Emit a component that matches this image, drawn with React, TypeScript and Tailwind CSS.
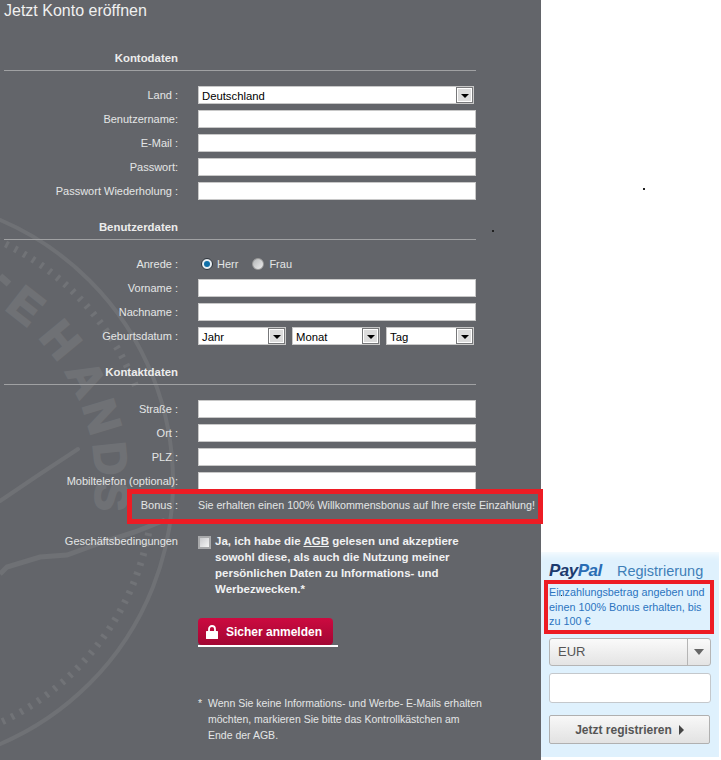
import React from "react";

const font = { fontFamily: '"Liberation Sans", Arial, sans-serif' };

const letters: [string, number][] = [
  ["E", -52],
  ["H", -39.5],
  ["A", -27.5],
  ["N", -17],
  ["D", -6],
  ["S", 3.5],
];

function Watermark() {
  const cx = -112;
  const cy = 482;
  const ticks: React.ReactNode[] = [];
  for (let a = -70; a <= 72; a += 2.2) {
    if (a > -20 && a < 11) continue;
    const r = (a * Math.PI) / 180;
    ticks.push(
      <line
        key={a}
        x1={cx + 262 * Math.cos(r)}
        y1={cy + 262 * Math.sin(r)}
        x2={cx + 269 * Math.cos(r)}
        y2={cy + 269 * Math.sin(r)}
        stroke="#717377"
        strokeWidth="3"
      />
    );
  }
  return (
    <svg className="absolute left-0 top-0" width="541" height="760" viewBox="0 0 541 760" aria-hidden="true">
      <circle cx={cx} cy={cy} r="285" fill="none" stroke="#6f7175" strokeWidth="4" />
      {ticks}
      {letters.map(([ch, a]) => {
        const r = (a * Math.PI) / 180;
        const x = cx + 208 * Math.cos(r);
        const y = cy + 208 * Math.sin(r);
        return (
          <text
            key={ch}
            transform={`translate(${x} ${y}) rotate(${a + 90})`}
            textAnchor="middle"
            fontSize="46"
            fontWeight="700"
            fill="#6f7175"
            stroke="#6f7175"
            strokeWidth="2"
            style={font}
          >
            {ch}
          </text>
        );
      })}
      <path d="M0 276 L9 284" fill="none" stroke="#6f7175" strokeWidth="7" />
      <path d="M0 501 L40 474 L72 453 L78 449" fill="none" stroke="#6f7175" strokeWidth="4" strokeLinecap="round" />
      <path d="M0 574 L7 567 L40 557 L67 555 L100 543 L135 532 L165 520" fill="none" stroke="#6f7175" strokeWidth="5" />
    </svg>
  );
}

function Arrow() {
  return (
    <span className="flex h-[16px] w-[17px] shrink-0 items-center justify-center border border-[#77787a] bg-[#dcdcdc] shadow-[inset_0_0_0_1px_#ffffff]">
      <span className="mt-[2px] h-0 w-0 border-x-[4px] border-t-[4px] border-x-transparent border-t-black" />
    </span>
  );
}

function Select({ label, className }: { label: string; className: string }) {
  return (
    <div className={`flex h-[18px] items-center justify-between bg-white pl-[4px] pr-[1px] outline outline-1 -outline-offset-1 outline-[#c8c8c8] ${className}`}>
      <span className="pt-[1px] text-[11.3px] leading-[18px] text-black">{label}</span>
      <Arrow />
    </div>
  );
}

function Field() {
  return <div className="h-[18px] w-[278px] border border-[#c8c8c8] bg-white" />;
}

function Row({ label, children, className = "mt-[6px]" }: { label: string; children?: React.ReactNode; className?: string }) {
  return (
    <div className={`flex h-[18px] items-center gap-[20px] ${className}`}>
      <div className="w-[178px] shrink-0 whitespace-nowrap pt-[1px] text-right text-[11px] leading-[17px] text-[#e4e5e6]">{label}</div>
      {children}
    </div>
  );
}

function Section({ title, className }: { title: string; className: string }) {
  return (
    <div className={className}>
      <div className="w-[178px] pt-[1px] text-right text-[11.4px] font-bold leading-[15px] text-[#ececec]">{title}</div>
      <div className="ml-[4px] mt-[4px] h-px w-[472px] bg-[#a0a1a3]" />
    </div>
  );
}

export default function App() {
  return (
    <div className="relative flex h-[760px] w-[721px] overflow-hidden bg-white" style={font}>
      <div className="relative h-[760px] w-[541px] shrink-0 overflow-hidden bg-[#63656a]">
        <Watermark />
        <div className="relative">
          <h1 className="pl-[4px] pt-[1px] text-[16px] font-normal leading-[19px] text-[#f0f0f0]">Jetzt Konto eröffnen</h1>

          <Section title="Kontodaten" className="mt-[30px]" />
          <Row label="Land :" className="mt-[15px]">
            <Select label="Deutschland" className="w-[276px]" />
          </Row>
          <Row label="Benutzername:"><Field /></Row>
          <Row label="E-Mail :"><Field /></Row>
          <Row label="Passwort:"><Field /></Row>
          <Row label="Passwort Wiederholung :"><Field /></Row>

          <Section title="Benutzerdaten" className="mt-[19px]" />
          <Row label="Anrede :" className="mt-[15px]">
            <div className="flex items-center text-[11px] text-[#e4e5e6]">
              <span className="ml-[3px] flex h-[12px] w-[12px] items-center justify-center rounded-full border border-[#2a3038] bg-[#e8eef2]">
                <span className="h-[6px] w-[6px] rounded-full bg-[#0f6fa8]" />
              </span>
              <span className="ml-[4px]">Herr</span>
              <span className="ml-[14px] h-[12px] w-[12px] rounded-full border border-[#9a9a9a] bg-gradient-to-br from-[#b4b6b8] to-[#eeeeee]" />
              <span className="ml-[5px]">Frau</span>
            </div>
          </Row>
          <Row label="Vorname :"><Field /></Row>
          <Row label="Nachname :"><Field /></Row>
          <Row label="Geburtsdatum :">
            <div className="flex gap-[6px]">
              <Select label="Jahr" className="w-[88px]" />
              <Select label="Monat" className="w-[88px]" />
              <Select label="Tag" className="w-[88px]" />
            </div>
          </Row>

          <Section title="Kontaktdaten" className="mt-[19px]" />
          <Row label="Straße :" className="mt-[15px]"><Field /></Row>
          <Row label="Ort :"><Field /></Row>
          <Row label="PLZ :"><Field /></Row>
          <Row label="Mobiltelefon (optional):"><Field /></Row>

          <Row label="Bonus :" className="mt-[6px]">
            <span className="whitespace-nowrap pt-[1px] text-[10.7px] leading-[17px] text-[#e4e5e6]">
              Sie erhalten einen 100% Willkommensbonus auf Ihre erste Einzahlung!
            </span>
          </Row>

          <div className="mt-[19px] flex gap-[20px]">
            <div className="w-[178px] shrink-0 pt-[1px] text-right text-[11px] leading-[15px] text-[#e4e5e6]">Geschäftsbedingungen</div>
            <div className="flex">
              <span className="mt-[3px] h-[13px] w-[13px] shrink-0 border-2 border-[#a8a9ab] bg-gradient-to-br from-[#c9cacd] to-[#f5f5f5]" />
              <p className="ml-[4px] w-[262px] text-[11.5px] font-bold leading-[16px] text-[#f0f1f2]">
                Ja, ich habe die <span className="underline">AGB</span> gelesen und akzeptiere sowohl diese, als auch die Nutzung meiner persönlichen Daten zu Informations- und Werbezwecken.*
              </p>
            </div>
          </div>

          <div className="ml-[198px] mt-[21px] w-[140px] border-b-2 border-white">
            <button className="flex h-[27px] w-[135px] items-center rounded-[4px] bg-gradient-to-b from-[#cc0a40] to-[#a30733] pl-[8px] text-[12px] font-bold text-white">
              <svg width="12" height="14" viewBox="0 0 12 14" className="mr-[8px] shrink-0">
                <path d="M3 6V4a3 3 0 0 1 6 0v2" fill="none" stroke="#fff" strokeWidth="1.8" />
                <rect x="0" y="6" width="12" height="8" rx="0.5" fill="#fff" />
              </svg>
              Sicher anmelden
            </button>
          </div>

          <div className="ml-[198px] mt-[48px] flex text-[10.5px] leading-[16px] text-[#e4e5e6]">
            <span className="w-[10px] shrink-0">*</span>
            <p className="w-[290px]">
              Wenn Sie keine Informations- und Werbe- E-Mails erhalten<br />
              möchten, markieren Sie bitte das Kontrollkästchen am<br />
              Ende der AGB.
            </p>
          </div>
        </div>

        <span className="absolute left-[492px] top-[230px] h-[2px] w-[2px] bg-[#222]" />
      </div>

      <div className="flex w-[180px] flex-col pb-[3px]">
        <div className="flex-1" />
        <div className="flex h-[205px] w-[178px] flex-col bg-[#dff1fd] pl-[8px] pr-[8px] shadow-[inset_0_8px_8px_-6px_#ffffff]">
          <div className="mt-[10px] flex h-[18px] items-center">
            <span className="w-[68px] text-[17px] font-bold italic leading-[18px] tracking-[-0.5px]">
              <span className="text-[#1c3a6e]">Pay</span><span className="text-[#2a6db5]">Pal</span>
            </span>
            <span className="text-[14.5px] leading-[18px] text-[#3f7fb8]">Registrierung</span>
          </div>
          <p className="mt-[4px] w-[163px] pt-[1px] text-[10.8px] leading-[14.5px] text-[#2b74c0]">
            Einzahlungsbetrag angeben und einen 100% Bonus erhalten, bis zu 100 €
          </p>
          <div className="mt-[9px] flex h-[28px] w-[162px] items-center rounded-[3px] border border-[#b5b5b5] bg-gradient-to-b from-[#fafafa] to-[#e4e4e4] pl-[8px] text-[13px] text-[#555]">
            <span className="flex-1 pt-[1px]">EUR</span>
            <span className="flex h-full w-[23px] items-center justify-center border-l border-[#b5b5b5]">
              <span className="h-0 w-0 border-x-[5px] border-t-[6px] border-x-transparent border-t-[#666]" />
            </span>
          </div>
          <div className="mt-[7px] h-[30px] w-[162px] rounded-[3px] border border-[#c4c8cc] bg-white" />
          <div className="mt-[12px] flex h-[29px] w-[161px] items-center justify-center gap-[7px] rounded-[2px] border border-[#b0b0b0] bg-gradient-to-b from-[#f8f8f8] to-[#e2e2e2] pt-[1px] text-[12px] font-bold text-[#555]">
            Jetzt registrieren
            <span className="h-0 w-0 border-y-[5px] border-l-[5px] border-y-transparent border-l-[#444]" />
          </div>
        </div>
      </div>

      <span className="absolute left-[643px] top-[188px] h-[2px] w-[2px] bg-[#222]" />
      <span className="absolute left-[561px] top-[595px] h-px w-px bg-[#222]" />
      <div className="pointer-events-none absolute left-[127px] top-[489px] h-[35px] w-[416px] border-[5px] border-[#ed1c24]" />
      <div className="pointer-events-none absolute left-[544px] top-[580px] h-[54px] w-[170px] border-[4px] border-[#ed1c24]" />
    </div>
  );
}
